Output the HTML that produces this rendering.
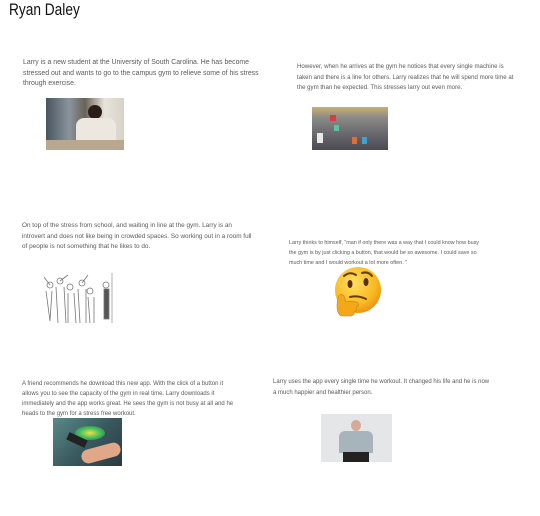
<!DOCTYPE html>
<html><head><meta charset="utf-8"><style>
body{margin:0;width:540px;height:516px;background:#fff;position:relative;overflow:hidden;font-family:"Liberation Sans",sans-serif}
.t{position:absolute;color:#5a5a5a;font-size:6px;line-height:10.5px;white-space:nowrap}
.i{position:absolute;overflow:hidden}
h1{position:absolute;left:9px;top:1px;margin:0;font-weight:normal;font-size:16.5px;color:#111;font-family:"Liberation Sans",sans-serif;transform:scaleX(0.83);transform-origin:left top}
</style></head><body>
<h1>Ryan Daley</h1>

<div class="t" style="left:23px;top:58px;font-size:6.9px">Larry is a new student at the University of South Carolina. He has become<br>stressed out and wants to go to the campus gym to relieve some of his stress<br>through exercise.</div>
<div class="i" style="left:46px;top:98px;width:78px;height:52px;background:linear-gradient(90deg,#4a5560 0%,#8a949c 30%,#6a6258 50%,#e8e4dc 75%,#d8d2c6 100%)">
<div style="position:absolute;left:42px;top:7px;width:14px;height:14px;border-radius:50%;background:#2a1e18"></div>
<div style="position:absolute;left:30px;top:20px;width:40px;height:24px;border-radius:8px 8px 0 0;background:#ece8e0"></div>
<div style="position:absolute;left:0;top:42px;width:78px;height:10px;background:#b8a890"></div>
</div>

<div class="t" style="left:297px;top:62px;font-size:6.1px">However, when he arrives at the gym he notices that every single machine is<br>taken and there is a line for others. Larry realizes that he will spend more time at<br>the gym than he expected. This stresses larry out even more.</div>
<div class="i" style="left:312px;top:107px;width:76px;height:43px;background:linear-gradient(180deg,#c8b070 0%,#8a8a88 25%,#6a6a70 60%,#4a4a50 100%)">
<div style="position:absolute;left:18px;top:8px;width:6px;height:6px;background:#d04040"></div>
<div style="position:absolute;left:40px;top:30px;width:5px;height:7px;background:#e07030"></div>
<div style="position:absolute;left:50px;top:30px;width:5px;height:7px;background:#40a0d0"></div>
<div style="position:absolute;left:22px;top:18px;width:5px;height:6px;background:#60c0a0"></div>
<div style="position:absolute;left:5px;top:26px;width:6px;height:10px;background:#e8e8e8"></div>
</div>

<div class="t" style="left:22px;top:221px;font-size:6.4px">On top of the stress from school, and waiting in line at the gym. Larry is an<br>introvert and does not like being in crowded spaces. So working out in a room full<br>of people is not something that he likes to do.</div>
<svg class="i" style="left:42px;top:273px" width="74" height="54" viewBox="0 0 74 54" fill="none" stroke="#777" stroke-width="0.8">
<circle cx="8" cy="12" r="3"/><circle cx="18" cy="8" r="3"/><circle cx="28" cy="14" r="3"/><circle cx="40" cy="10" r="3"/><circle cx="48" cy="18" r="3"/><circle cx="64" cy="12" r="3"/>
<path d="M4 18l4 30M10 18l-2 30M14 14l2 36M22 14l2 36M26 20l0 30M32 20l2 30M36 16l2 34M44 16l0 34M46 24l2 26M52 24l0 26M2 4l6 8M26 2l-8 6M46 2l-6 8"/>
<path d="M62 16h5v30h-5z" fill="#555"/><path d="M70 0v50" stroke="#999"/>
</svg>

<div class="t" style="left:289px;top:238px;font-size:5.4px;line-height:10px">Larry thinks to himself, “man if only there was a way that I could know how busy<br>the gym is by just clicking a button, that would be so awesome. I could save so<br>much time and I would workout a lot more often. ”</div>
<svg class="i" style="left:330px;top:264px" width="56" height="56" viewBox="0 0 56 56">
<defs><radialGradient id="g" cx="0.4" cy="0.35" r="0.7"><stop offset="0" stop-color="#ffe060"/><stop offset="0.7" stop-color="#f8b820"/><stop offset="1" stop-color="#e89010"/></radialGradient></defs>
<circle cx="28" cy="26" r="23" fill="url(#g)"/>
<path d="M14 12q6-5 12-1M32 9q6-2 10 3" stroke="#6a3a10" stroke-width="2" fill="none" stroke-linecap="round"/>
<ellipse cx="20" cy="20" rx="2.5" ry="4" fill="#5a3010"/><ellipse cx="36" cy="18" rx="2.5" ry="4" fill="#5a3010"/>
<path d="M20 33q8-2 16 2" stroke="#6a3a10" stroke-width="2" fill="none" stroke-linecap="round"/>
<path d="M8 34q2-6 6-2l2 6q8-2 12 1q2 3-2 4q2 3-2 5q1 3-3 4l-10 0q-6-4-3-18z" fill="#f4a818" stroke="#d08010" stroke-width="0.6"/>
</svg>

<div class="t" style="left:22px;top:379px;line-height:10px">A friend recommends he download this new app. With the click of a button it<br>allows you to see the capacity of the gym in real time. Larry downloads it<br>immediately and the app works great. He sees the gym is not busy at all and he<br>heads to the gym for a stress free workout.</div>
<div class="i" style="left:53px;top:418px;width:69px;height:48px;background:linear-gradient(135deg,#5a8a88 0%,#3a5a60 50%,#2a3a40 100%)">
<div style="position:absolute;left:22px;top:8px;width:30px;height:14px;border-radius:50%;background:radial-gradient(#f0e040,#40c060 50%,rgba(60,150,200,0))"></div>
<div style="position:absolute;left:14px;top:18px;width:20px;height:8px;background:#222;transform:rotate(25deg)"></div>
<div style="position:absolute;left:28px;top:28px;width:40px;height:14px;border-radius:8px;background:#e0a888;transform:rotate(-15deg)"></div>
</div>

<div class="t" style="left:273px;top:377px">Larry uses the app every single time he workout. It changed his life and he is now<br>a much happier and healthier person.</div>
<div class="i" style="left:321px;top:414px;width:71px;height:48px;background:#e4e6e8">
<div style="position:absolute;left:30px;top:6px;width:10px;height:11px;border-radius:50%;background:#d8a898"></div>
<div style="position:absolute;left:18px;top:17px;width:34px;height:22px;border-radius:6px 6px 0 0;background:#a8b4bc"></div>
<div style="position:absolute;left:22px;top:38px;width:26px;height:10px;background:#222"></div>
</div>
</body></html>
